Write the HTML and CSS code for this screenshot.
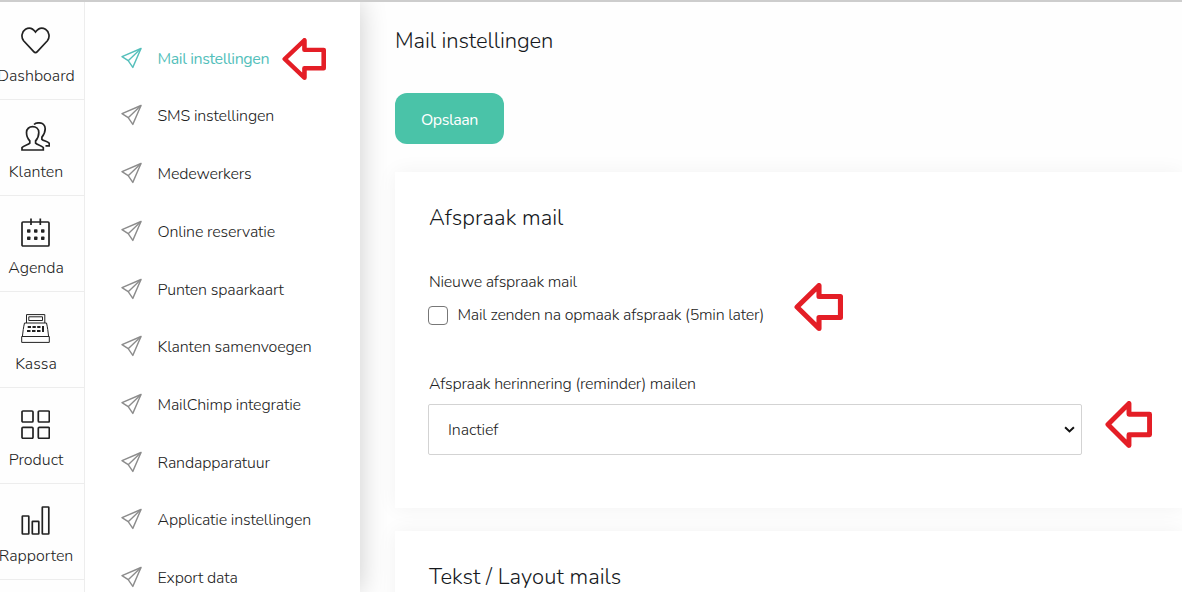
FILE: index.html
```html
<!DOCTYPE html>
<html lang="nl">
<head>
<meta charset="UTF-8" />
<meta name="viewport" content="width=device-width, initial-scale=1" />
<title>Mail instellingen</title>
<link rel="stylesheet" href="styles.css">
</head>
<body>
  <svg class="sprite" xmlns="http://www.w3.org/2000/svg" aria-hidden="true">
    <symbol id="plane" viewBox="0 0 22 22">
      <path d="M20 1.500L1 9.600l6.200 4.100 4.600 6.700z"/>
      <path d="M20 1.500L7.200 13.700"/>
    </symbol>
    <symbol id="arrow" viewBox="0 0 48 48" preserveAspectRatio="none">
      <path d="M3 24L24.500 2.500V13.500H45.500V34.500H24.500V45.500z"/>
    </symbol>
  </svg>

  <div class="app">
    <nav class="main-nav">
      <a class="main-item" href="#">
        <svg viewBox="0 0 29 29"><path d="M14.500 26.700C13.800 26.700 13.300 26.300 12.700 25.600L2.600 14.800C-.2 11.200.7 5.700 4.500 3.300 8.200 1.100 12 2.700 14.500 6.100 17 2.700 20.800 1.100 24.500 3.300 28.300 5.700 29.200 11.200 26.400 14.800L16.300 25.600C15.700 26.300 15.200 26.700 14.500 26.700z"/></svg>
        <span>Dashboard</span>
      </a>
      <a class="main-item" href="#">
        <svg viewBox="0 0 29 29"><path d="M1 28V25.500C3 23.300 7.200 22.800 8.800 21.200V18.900C6.500 16.500 5.500 13.500 5.500 10.500 5.500 6.900 8.200 4.700 11.600 4.700S17.800 6.900 17.800 10.500C17.800 13.500 16.800 16.500 14.600 18.900V21.200C16.200 22.800 20.300 23.300 22.300 25.500V28z"/><path d="M13 2.500C14.200 1.300 16 .8 17.900.8 21.500.8 24.200 3.200 24.200 6.800 24.200 10 22.900 12.800 20.900 15.100V17.300C22.500 18.900 26.400 19.300 28.300 21.300V23.800H24.500"/></svg>
        <span>Klanten</span>
      </a>
      <a class="main-item" href="#">
        <svg viewBox="0 0 29 29"><rect x="1" y="4" width="27" height="24" rx="1"/><path d="M10 .5V7M19.300 .5V7"/><g class="solid"><rect x="6" y="11.200" width="3.500" height="3.500" rx=".8"/><rect x="13" y="11.200" width="3.500" height="3.500" rx=".8"/><rect x="20" y="11.200" width="3.500" height="3.500" rx=".8"/><rect x="6" y="18.500" width="3.500" height="3.500" rx=".8"/><rect x="13" y="18.500" width="3.500" height="3.500" rx=".8"/><rect x="20" y="18.500" width="3.500" height="3.500" rx=".8"/></g></svg>
        <span>Agenda</span>
      </a>
      <a class="main-item" href="#">
        <svg class="thin" viewBox="0 0 29 29"><path d="M5.500 9V.6H23.800V9M7.800 2.800H21.500V6.500H7.800zM3.500 9H25.500M3.500 9C2.500 13 1.900 18 1.400 22.500M25.500 9C26.500 13 27.100 18 27.600 22.500M.7 22.500H28.300V28.400H.7z"/><g class="solid"><path d="M6.700 12H10v2H6.700zM11.500 12H14.800v2H11.500zM16.200 12H19.500v2H16.200zM6 16H9.500v2H6zM11 16H14.500v2H11zM16 16H19.500v2H16zM21 12H23v6H21z"/></g></svg>
        <span>Kassa</span>
      </a>
      <a class="main-item" href="#">
        <svg viewBox="0 0 29 29"><rect x="1" y="1" width="11" height="11" rx="1"/><rect x="17.300" y="1" width="11" height="11" rx="1"/><rect x="1" y="17.300" width="11" height="11" rx="1"/><rect x="17.300" y="17.300" width="11" height="11" rx="1"/></svg>
        <span>Product</span>
      </a>
      <a class="main-item" href="#">
        <svg viewBox="0 0 29 29"><rect x="1.300" y="10" width="6.500" height="18" rx=".5"/><rect x="11.300" y="15.300" width="6.500" height="12.700" rx=".5"/><rect x="21.300" y="1" width="6.500" height="27" rx=".5"/></svg>
        <span>Rapporten</span>
      </a>
    </nav>

    <nav class="sub-nav">
      <a class="sub-item active" href="#"><svg><use href="#plane"/></svg><span>Mail instellingen</span><svg class="arrow arrow-menu"><use href="#arrow"/></svg></a>
      <a class="sub-item" href="#"><svg><use href="#plane"/></svg><span>SMS instellingen</span></a>
      <a class="sub-item" href="#"><svg><use href="#plane"/></svg><span>Medewerkers</span></a>
      <a class="sub-item" href="#"><svg><use href="#plane"/></svg><span>Online reservatie</span></a>
      <a class="sub-item" href="#"><svg><use href="#plane"/></svg><span>Punten spaarkaart</span></a>
      <a class="sub-item" href="#"><svg><use href="#plane"/></svg><span>Klanten samenvoegen</span></a>
      <a class="sub-item" href="#"><svg><use href="#plane"/></svg><span>MailChimp integratie</span></a>
      <a class="sub-item" href="#"><svg><use href="#plane"/></svg><span>Randapparatuur</span></a>
      <a class="sub-item" href="#"><svg><use href="#plane"/></svg><span>Applicatie instellingen</span></a>
      <a class="sub-item" href="#"><svg><use href="#plane"/></svg><span>Export data</span></a>
    </nav>

    <main class="content">
      <h1>Mail instellingen</h1>
      <button class="save-button" type="button">Opslaan</button>

      <section class="card">
        <h2>Afspraak mail</h2>
        <div class="field">
          <div class="label">Nieuwe afspraak mail</div>
          <label class="check"><input type="checkbox"><span>Mail zenden na opmaak afspraak (5min later)</span></label>
          <svg class="arrow arrow-check"><use href="#arrow"/></svg>
        </div>
        <div class="field">
          <label class="label" for="reminder">Afspraak herinnering (reminder) mailen</label>
          <div class="select">
            <select id="reminder"><option>Inactief</option></select>
            <svg class="chevron" viewBox="0 0 10 6"><path d="M1 1l4 3.800L9 1"/></svg>
          </div>
          <svg class="arrow arrow-select"><use href="#arrow"/></svg>
        </div>
      </section>

      <section class="card">
        <h2>Tekst / Layout mails</h2>
      </section>
    </main>
  </div>
</body>
</html>
```
FILE: styles.css
```css
:root {
  --accent: #4ac3a8;
  --active: #55bfbb;
  --text: #222;
  --heading: #16191d;
  --line: #ededed;
  --arrow: #e41e26;
}
* {
  box-sizing: border-box;
}
body {
  margin: 0;
  height: 100vh;
  overflow: hidden;
  border-top: 2px solid #cdcdcd;
  background: #fefefe;
  color: var(--text);
  font-family: Nunito, Lato, sans-serif;
  font-size: 16px;
  font-weight: 300;
  line-height: 20px;
}
a {
  color: inherit;
  text-decoration: none;
}
svg {
  fill: none;
  stroke: currentColor;
  flex: none;
}
.sprite {
  display: none;
}
.app {
  display: flex;
  height: 590px;
}

/* main navigation */
.main-nav {
  width: 97px;
  flex: none;
  margin-left: -12px;
  padding-top: 2px;
  border-right: 1px solid var(--line);
  background: #fefefe;
}
.main-item {
  display: flex;
  flex-direction: column;
  align-items: center;
  gap: 11px;
  height: 96px;
  padding-top: 22px;
  border-bottom: 1px solid var(--line);
}
.main-item svg {
  width: 29px;
  height: 29px;
  margin-right: 1px;
  color: #222;
  stroke-width: 1.7;
}
.main-item svg.thin {
  stroke-width: 1;
}
.solid {
  fill: currentColor;
  stroke: none;
}

/* settings menu */
.sub-nav {
  position: relative;
  z-index: 2;
  width: 275px;
  flex: none;
  padding: 27.800px 0 0 36px;
  background: #fff;
  box-shadow: 0 0 26px rgba(0, 0, 0, 0.2);
  clip-path: inset(0 -50px 0 0);
  letter-spacing: -0.16px;
}
.sub-item {
  position: relative;
  display: flex;
  align-items: center;
  gap: 14.500px;
  height: 57.720px;
}
.sub-item > svg:first-child {
  width: 22px;
  height: 22px;
  margin-top: -2px;
  color: #8c8c8c;
  stroke-width: 1.4;
  stroke-linejoin: round;
}
.sub-item.active,
.active > svg:first-child {
  color: var(--active);
}
.active span {
  font-weight: 400;
  letter-spacing: -0.4px;
}

/* content */
.content {
  flex: 1;
  min-width: 0;
  padding: 24px 0 0 35px;
}
h1,
h2 {
  margin: 0;
  color: var(--heading);
  font-size: 22px;
  font-weight: 300;
  line-height: 30px;
}
h1 {
  letter-spacing: -0.08px;
}
h2 {
  letter-spacing: 0.06px;
}
.save-button {
  display: block;
  width: 109px;
  height: 51px;
  margin: 37px 0 28px;
  padding: 2px 0 0;
  border: 0;
  border-radius: 12px;
  background: var(--accent);
  color: #fff;
  font: inherit;
  font-weight: 400;
  letter-spacing: -0.45px;
}
.card {
  height: 336px;
  margin-bottom: 23px;
  padding: 31px 0 0 34px;
  background: #fff;
  box-shadow: 0 0 20px rgba(0, 0, 0, 0.05);
}
.field {
  position: relative;
  margin-top: 39px;
  letter-spacing: -0.23px;
}
.field + .field {
  margin-top: 49px;
}
.label {
  display: block;
}
.check {
  display: flex;
  align-items: center;
  gap: 9.500px;
  margin-top: 13px;
}
.check input {
  appearance: none;
  width: 20px;
  height: 19px;
  margin: 0 0 0 -1px;
  border: 1px solid #777;
  border-radius: 4px;
  background: #fff;
}
.select {
  position: relative;
  width: 654px;
  margin: 10px 0 0 -1px;
}
.select select {
  display: block;
  appearance: none;
  width: 100%;
  height: 51px;
  padding: 0 19px;
  border: 1px solid #d3d3d3;
  border-radius: 2px;
  background: #fff;
  color: inherit;
  font: inherit;
  letter-spacing: -0.1px;
}
.chevron {
  position: absolute;
  top: 22px;
  right: 7px;
  width: 11px;
  height: 7px;
  color: #111;
  stroke-width: 1.8;
}

/* red pointers */
.arrow {
  position: absolute;
  color: var(--arrow);
  stroke-width: 5;
  stroke-linejoin: round;
}
.arrow-menu {
  top: 8px;
  left: 161px;
  width: 44px;
  height: 42px;
}
.arrow-check {
  top: 11px;
  left: 365px;
  width: 49px;
  height: 48px;
}
.arrow-select {
  top: 27px;
  left: 676px;
  width: 47px;
  height: 47px;
}
```
